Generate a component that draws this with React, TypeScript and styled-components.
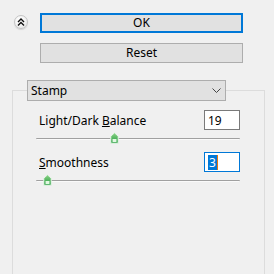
import styled, { createGlobalStyle } from "styled-components";

const GlobalStyle = createGlobalStyle`
  html, body {
    margin: 0;
    padding: 0;
    background: #f0f0f0;
  }
  body {
    font-family: "Noto Sans", "Open Sans", "Liberation Sans", sans-serif;
    font-size: 12px;
    color: #000;
  }
`;

const Panel = styled.div`
  width: 274px;
  height: 274px;
  overflow: hidden;
  background: #f0f0f0;
`;

const TopBar = styled.div`
  display: flex;
  align-items: flex-start;
  padding: 13px 0 0 14px;
  gap: 12px;
`;

const CollapseButton = styled.div`
  width: 14px;
  height: 14px;
  margin-top: 2px;
  border-radius: 50%;
  border: 1px solid #c4c4c4;
  background: radial-gradient(circle at 40% 35%, #ffffff 0%, #f2f2f2 55%, #dcdcdc 100%);
  box-shadow: 0 1px 1px rgba(0, 0, 0, 0.12);
  display: flex;
  align-items: center;
  justify-content: center;
  box-sizing: border-box;
`;

const ButtonColumn = styled.div`
  display: flex;
  flex-direction: column;
  gap: 10px;
  width: 203px;
`;

const PushButton = styled.div<{ $default?: boolean }>`
  height: 20px;
  box-sizing: border-box;
  background: #e1e1e1;
  border: ${({ $default }) => ($default ? "2px solid #0078d7" : "1px solid #adadad")};
  display: flex;
  align-items: center;
  justify-content: center;
  font-size: 12px;
  line-height: 1;
`;

const Group = styled.fieldset`
  margin: 17px 0 0 12px;
  width: 253px;
  height: 200px;
  box-sizing: border-box;
  border: 1px solid #dcdcdc;
  border-bottom: none;
  padding: 0 24px 0 14px;
`;

const Legend = styled.legend`
  padding: 0;
  margin: 0;
`;

const Dropdown = styled.div`
  width: 199px;
  height: 21px;
  box-sizing: border-box;
  background: #e1e1e1;
  border: 1px solid #adadad;
  display: flex;
  align-items: center;
  justify-content: space-between;
  padding: 0 4px 0 3px;
`;

const Content = styled.div`
  display: flex;
  flex-direction: column;
  padding: 9px 0 0 9px;
`;

const ParamRow = styled.div`
  display: flex;
  align-items: center;
  justify-content: space-between;
  height: 20px;
`;

const Label = styled.span`
  padding-left: 3px;
  font-size: 12px;
`;

const NumberBox = styled.div<{ $focused?: boolean }>`
  width: 36px;
  height: 20px;
  box-sizing: border-box;
  background: #fff;
  border: 1px solid ${({ $focused }) => ($focused ? "#0078d7" : "#7a7a7a")};
  display: flex;
  align-items: center;
  padding-left: 3px;
  font-size: 12px;
`;

const Selected = styled.span`
  background: #0078d7;
  color: #fff;
  line-height: 15px;
  padding: 0 1px;
`;

const Caret = styled.span`
  width: 1px;
  height: 15px;
  background: #e8760c;
`;

const SliderWrap = styled.div`
  position: relative;
  height: 16px;
  margin-bottom: 6px;
`;

const Track = styled.div`
  position: absolute;
  left: 0;
  right: 0;
  top: 8px;
  height: 1px;
  background: #a0a0a0;
  border-bottom: 1px solid #fafafa;
  border-radius: 1px;
`;

const Thumb = styled.svg`
  position: absolute;
  top: 2px;
`;

const SliderThumb = ({ left }: { left: number }) => (
  <Thumb width="9" height="12" viewBox="0 0 9 12" style={{ left: left - 4 }}>
    <defs>
      <linearGradient id="tg" x1="0" y1="0" x2="0" y2="1">
        <stop offset="0" stopColor="#8fd48a" />
        <stop offset="1" stopColor="#1f9a3a" />
      </linearGradient>
    </defs>
    <path d="M4.5 0.8 L8.2 4.2 L8.2 11.2 L0.8 11.2 L0.8 4.2 Z" fill="url(#tg)" stroke="#e8f5e8" strokeWidth="1" />
    <path d="M2.5 7 L6.5 7 L6.5 10 L2.5 10 Z" fill="#f4fff2" opacity="0.9" />
  </Thumb>
);

const Slider = ({ value }: { value: number }) => (
  <SliderWrap>
    <Track />
    <SliderThumb left={value} />
  </SliderWrap>
);

export default function App() {
  return (
    <Panel>
      <GlobalStyle />
      <TopBar>
        <CollapseButton>
          <svg width="8" height="8" viewBox="0 0 8 8">
            <path d="M1 4 L4 1 L7 4 M1 7.5 L4 4.5 L7 7.5" fill="none" stroke="#111" strokeWidth="1.4" />
          </svg>
        </CollapseButton>
        <ButtonColumn>
          <PushButton $default>OK</PushButton>
          <PushButton>Reset</PushButton>
        </ButtonColumn>
      </TopBar>
      <Group>
        <Legend>
          <Dropdown>
            <span>Stamp</span>
            <svg width="9" height="5" viewBox="0 0 9 5">
              <path d="M0.5 0.5 L4.5 4.5 L8.5 0.5" fill="none" stroke="#444" strokeWidth="1" />
            </svg>
          </Dropdown>
        </Legend>
        <Content>
          <ParamRow>
            <Label>
              Light/Dark <u>B</u>alance
            </Label>
            <NumberBox>19</NumberBox>
          </ParamRow>
          <Slider value={78} />
          <ParamRow>
            <Label>
              <u>S</u>moothness
            </Label>
            <NumberBox $focused>
              <Selected>3</Selected>
              <Caret />
            </NumberBox>
          </ParamRow>
          <Slider value={11} />
        </Content>
      </Group>
    </Panel>
  );
}
